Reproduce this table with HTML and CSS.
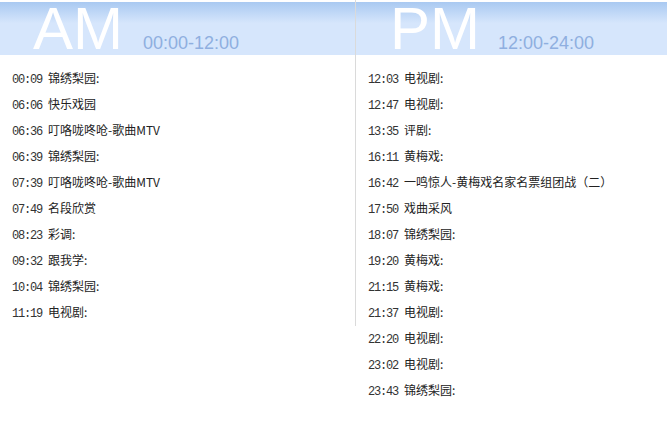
FILE: index.html
```html
<!DOCTYPE html>
<html>
<head>
    <meta charset="utf-8">
    <title>节目单</title>
    <link rel="stylesheet" href="styles.css">
</head>
<body>
    <div id="schedule">
        <div class="half am">
            <div class="half-head">
                <span class="big">AM</span>
                <span class="range">00:00-12:00</span>
            </div>
            <ul class="prog-list">
                <li><span class="time">00:09</span>锦绣梨园:</li>
                <li><span class="time">06:06</span>快乐戏园</li>
                <li><span class="time">06:36</span>叮咯咙咚呛-歌曲MTV</li>
                <li><span class="time">06:39</span>锦绣梨园:</li>
                <li><span class="time">07:39</span>叮咯咙咚呛-歌曲MTV</li>
                <li><span class="time">07:49</span>名段欣赏</li>
                <li><span class="time">08:23</span>彩调:</li>
                <li><span class="time">09:32</span>跟我学:</li>
                <li><span class="time">10:04</span>锦绣梨园:</li>
                <li><span class="time">11:19</span>电视剧:</li>
            </ul>
        </div>
        <div class="half pm">
            <div class="half-head">
                <span class="big">PM</span>
                <span class="range">12:00-24:00</span>
            </div>
            <ul class="prog-list">
                <li><span class="time">12:03</span>电视剧:</li>
                <li><span class="time">12:47</span>电视剧:</li>
                <li><span class="time">13:35</span>评剧:</li>
                <li><span class="time">16:11</span>黄梅戏:</li>
                <li><span class="time">16:42</span>一鸣惊人-黄梅戏名家名票组团战（二）</li>
                <li><span class="time">17:50</span>戏曲采风</li>
                <li><span class="time">18:07</span>锦绣梨园:</li>
                <li><span class="time">19:20</span>黄梅戏:</li>
                <li><span class="time">21:15</span>黄梅戏:</li>
                <li><span class="time">21:37</span>电视剧:</li>
                <li><span class="time">22:20</span>电视剧:</li>
                <li><span class="time">23:02</span>电视剧:</li>
                <li><span class="time">23:43</span>锦绣梨园:</li>
            </ul>
        </div>
    </div>
</body>
</html>
```

FILE: styles.css
```css
html {
    font-family: "Noto Sans CJK SC", sans-serif;
}
body {
    margin: 0;
    background: #fff;
}
#schedule {
    display: flex;
    align-items: flex-start;
}

.half {
    flex: none;
}
.am {
    width: 355px;
    border-right: 1px solid #dadada;
}
.pm {
    width: 311px;
}

.half-head {
    margin-top: 2px;
    height: 53px;
    display: flex;
    align-items: baseline;
    background: linear-gradient(#a9c9f1, #d6e6fc 40%, #d6e6fc);
    font-family: "Liberation Sans", Arial, sans-serif;
}
.am .half-head {
    padding-left: 33px;
}
.pm .half-head {
    padding-left: 34px;
}
.big {
    font-size: 60px;
    line-height: 53px;
    color: #fff;
}
.range {
    margin-left: 20px;
    font-size: 18px;
    color: #8fafe0;
}
.pm .range {
    margin-left: 18px;
}

.prog-list {
    list-style: none;
    margin: 10px 0 0;
    padding: 0 0 1px;
}
.prog-list li {
    height: 26px;
    line-height: 26px;
    padding-left: 12px;
    font-size: 12px;
    color: #222;
    white-space: nowrap;
}
.time {
    display: inline-block;
    width: 36px;
    font-family: "Liberation Mono", monospace;
    font-size: 12px;
    letter-spacing: -1.2px;
    color: #333;
}
```
